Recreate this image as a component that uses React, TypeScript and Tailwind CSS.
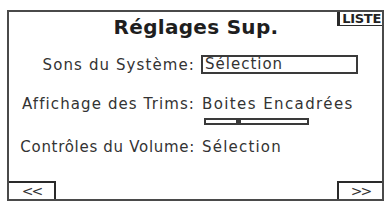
export default function App() {
  const font = { fontFamily: '"DejaVu Sans", "Liberation Sans", sans-serif' };
  return (
    <div className="w-[390px] h-[204px] bg-white pt-[10px] pl-[7px] pr-[6px] pb-[3px]" style={font}>
      <div className="relative flex h-full flex-col border-2 border-[#4a4a4a] text-[#333]">
        {/* Header */}
        <div className="flex h-[30px] items-center justify-center pl-[1px]">
          <h1 className="text-[20px] font-bold leading-none tracking-[0.3px] text-[#1e1e1e]">
            Réglages Sup.
          </h1>
        </div>
        <div className="absolute right-0 top-0 border-l-[3px] border-b border-[#2a2a2a] pl-[2px] pr-[1px] text-[13px] font-bold leading-[13px] tracking-[-0.3px] text-[#222]">
          LISTE
        </div>

        {/* Rows */}
        <div className="mt-[13px] grid grid-cols-[186px_1fr] items-center gap-x-[6px] text-[15px] leading-[18px]">
          <span className="text-right tracking-[1.1px]">Sons du Système:</span>
          <span className="w-[157px] border-2 border-[#3a3a3a] px-[2px] leading-[15px] tracking-[1px]">Sélection</span>

          <span className="mt-[21px] text-right tracking-[1.1px]">Affichage des Trims:</span>
          <span className="mt-[21px] pl-[1px] tracking-[1.4px]">Boites Encadrées</span>
          <span />
          <div className="ml-[3px] mt-[5px] h-[7px] w-[105px] border-2 border-[#3a3a3a]">
            <div className="ml-[30px] -mt-[2px] h-[7px] w-[5px] bg-[#3a3a3a]" />
          </div>

          <span className="mt-[13px] text-right tracking-[0.7px]">Contrôles du Volume:</span>
          <span className="mt-[13px] pl-[1px] tracking-[1.2px]">Sélection</span>
        </div>

        {/* Footer */}
        <div className="mt-auto flex items-end justify-between">
          <div className="flex h-[18px] w-[47px] items-center justify-center border-r-2 border-t-2 border-[#2a2a2a] text-[14px] leading-none tracking-[-2px]">
            &lt;&lt;
          </div>
          <div className="flex h-[18px] w-[45px] items-center justify-center border-l-2 border-t-2 border-[#2a2a2a] text-[14px] leading-none tracking-[-2px]">
            &gt;&gt;
          </div>
        </div>
      </div>
    </div>
  );
}
